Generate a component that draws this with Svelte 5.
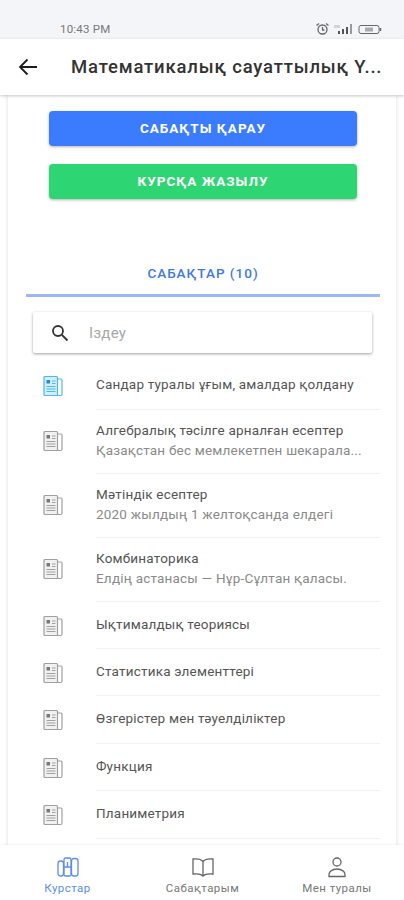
<script>
  const lessons = [
    { title: 'Сандар туралы ұғым, амалдар қолдану', active: true, h: 51 },
    { title: 'Алгебралық тәсілге арналған есептер', sub: 'Қазақстан бес мемлекетпен шекарала...', h: 64 },
    { title: 'Мәтіндік есептер', sub: '2020 жылдың 1 желтоқсанда елдегі', h: 64 },
    { title: 'Комбинаторика', sub: 'Елдің астанасы — Нұр-Сұлтан қаласы.', h: 64 },
    { title: 'Ықтималдық теориясы', h: 47 },
    { title: 'Статистика элементтері', h: 47 },
    { title: 'Өзгерістер мен тәуелділіктер', h: 48 },
    { title: 'Функция', h: 47 },
    { title: 'Планиметрия', h: 48 }
  ];
</script>

<div class="screen">
  <div class="status">
    <span class="time">10:43 PM</span>
    <div class="status-icons">
      <svg width="15" height="14" viewBox="0 0 15 14" fill="none" stroke="#666" stroke-width="1.3">
        <circle cx="7.5" cy="7.5" r="4.5" />
        <path d="M7.5 5v3h2M1.5 3.5l2.5-2M13.5 3.5l-2.5-2" />
      </svg>
      <svg width="22" height="12" viewBox="0 0 22 12" fill="#555">
        <rect x="5" y="8" width="2" height="3" />
        <rect x="9" y="6" width="2" height="5" />
        <rect x="13" y="4" width="2" height="7" />
        <rect x="17" y="1" width="2" height="10" fill="#999" />
        <rect x="1" y="2" width="6" height="3" fill="#d4d4d4" />
      </svg>
      <svg width="25" height="11" viewBox="0 0 25 11" fill="none" stroke="#666" stroke-width="1">
        <rect x="1" y="1.5" width="20" height="8" rx="2" />
        <path d="M22.5 4v3" stroke-width="1.5" />
        <rect x="7" y="3.5" width="8" height="4" fill="#aaa" stroke="none" />
      </svg>
    </div>
  </div>

  <header class="topbar">
    <svg class="back" width="20" height="18" viewBox="0 0 20 18" fill="none" stroke="#1c1c1c" stroke-width="1.8">
      <path d="M19 9H2M9.5 1.5 2 9l7.5 7.5" />
    </svg>
    <h1>Математикалық сауаттылық Ү...</h1>
  </header>

  <main class="card">
    <div class="actions">
      <button class="btn blue">САБАҚТЫ ҚАРАУ</button>
      <button class="btn green">КУРСҚА ЖАЗЫЛУ</button>
    </div>

    <div class="tab">САБАҚТАР (10)</div>

    <div class="search">
      <svg width="18" height="18" viewBox="0 0 18 18" fill="none" stroke="#333" stroke-width="1.8">
        <circle cx="7" cy="7" r="5" />
        <path d="M11 11l5.5 5.5" />
      </svg>
      <span>Іздеу</span>
    </div>

    <ul class="lessons">
      {#each lessons as lesson}
        <li class="lesson" class:plain={!lesson.sub && !lesson.active} class:first={lesson.active} style="height: {lesson.h}px">
          <svg class="doc" class:active={lesson.active} width="22" height="22" viewBox="0 0 22 22" fill="none" stroke="currentColor" stroke-width="1.2">
            <path class="sheet" d="M2 2.5a1 1 0 0 1 1-1h11.500a1 1 0 0 1 1 1V20.500H3a1 1 0 0 1-1-1z" />
            <path d="M15.500 4H19a1 1 0 0 1 1 1v14a1.500 1.500 0 0 1-1.500 1.500H14" />
            <rect class="pic" x="4.500" y="5" width="3.500" height="3.500" stroke="none" />
            <path d="M10 6h3.500M10 8.500h3.500M4.500 11.500h9M4.500 14h9M4.500 16.500h9" />
          </svg>
          <div class="lesson-body">
            <div class="lesson-title">{lesson.title}</div>
            {#if lesson.sub}
              <div class="lesson-sub">{lesson.sub}</div>
            {/if}
          </div>
        </li>
      {/each}
    </ul>
  </main>

  <nav class="bottom">
    <div class="nav-item current">
      <svg width="24" height="22" viewBox="0 0 24 22" fill="none" stroke="currentColor" stroke-width="1.3">
        <rect x="2" y="5" width="5.500" height="15" rx="2.500" />
        <rect x="8" y="2" width="7" height="18" rx="1.500" />
        <rect x="15.500" y="2.500" width="6.500" height="17.500" rx="2.500" />
        <path d="M8 11h7M11.500 6v5" />
      </svg>
      <span>Курстар</span>
    </div>
    <div class="nav-item">
      <svg width="24" height="22" viewBox="0 0 24 22" fill="none" stroke="currentColor" stroke-width="1.3">
        <path d="M12 5.500C10 3 6 2.500 2 3v15c4-.5 8 0 10 2 2-2 6-2.500 10-2V3c-4-.5-8 0-10 2.500zM12 5.500V20" />
      </svg>
      <span>Сабақтарым</span>
    </div>
    <div class="nav-item">
      <svg width="24" height="22" viewBox="0 0 24 22" fill="none" stroke="currentColor" stroke-width="1.3">
        <circle cx="12" cy="6" r="4" />
        <path d="M4 20.500v-2c0-3 3.500-5.500 8-5.500s8 2.500 8 5.500v2z" />
      </svg>
      <span>Мен туралы</span>
    </div>
  </nav>
</div>

<style>
  :global(body) {
    margin: 0;
    background: #fff;
  }

  .screen {
    width: 404px;
    height: 900px;
    overflow: hidden;
    position: relative;
    display: flex;
    flex-direction: column;
    font-family: Roboto, "Noto Sans", sans-serif;
    background: #fff;
  }

  .status {
    height: 39px;
    flex: none;
    box-sizing: border-box;
    padding: 22px 21px 0 60px;
    display: flex;
    justify-content: space-between;
    align-items: flex-start;
    background: #f4f5f9;
  }

  .time {
    font-size: 11.5px;
    line-height: 15px;
    letter-spacing: 0.2px;
    color: #777;
  }

  .status-icons {
    display: flex;
    align-items: center;
    gap: 3px;
  }

  .topbar {
    height: 56px;
    flex: none;
    display: flex;
    align-items: center;
    background: #fff;
    box-shadow: 0 1px 3px rgba(0, 0, 0, 0.22);
    position: relative;
    z-index: 2;
  }

  .back {
    margin-left: 18px;
    margin-right: 33px;
  }

  h1 {
    margin: 0;
    font-size: 18.5px;
    font-weight: 500;
    letter-spacing: 0.82px;
    color: #333;
    white-space: nowrap;
  }

  .card {
    flex: 1;
    margin: 0 8px;
    padding: 16px 16px 0 18px;
    background: #fff;
    box-shadow: 0 0 4px rgba(0, 0, 0, 0.14);
    min-height: 0;
  }

  .actions {
    display: flex;
    flex-direction: column;
    gap: 18px;
    padding: 0 23px;
  }

  .btn {
    height: 35px;
    border: 0;
    border-radius: 4px;
    padding: 0 0 2px;
    color: #fff;
    font-family: inherit;
    font-size: 13.5px;
    font-weight: 700;
    letter-spacing: 1px;
    box-shadow: 0 1px 3px rgba(0, 0, 0, 0.3);
  }

  .blue {
    background: #3b7cff;
  }

  .green {
    background: #2ed573;
  }

  .tab {
    margin-top: 60px;
    height: 38px;
    box-sizing: border-box;
    border-bottom: 3px solid #9db8f2;
    padding-top: 6px;
    text-align: center;
    font-size: 13.5px;
    font-weight: 500;
    letter-spacing: 1px;
    color: #3f78e0;
  }

  .search {
    margin: 15px 8px 0 7px;
    height: 41px;
    display: flex;
    align-items: center;
    padding-left: 18px;
    gap: 20px;
    background: #fff;
    box-shadow: 0 1px 3px rgba(0, 0, 0, 0.38);
    border-radius: 2px;
  }

  .search span {
    font-size: 15px;
    letter-spacing: 0.3px;
    color: #a8a8a8;
  }

  .lessons {
    list-style: none;
    margin: 6px 0 0;
    padding: 0;
  }

  .lesson {
    display: flex;
    align-items: center;
    box-sizing: border-box;
  }

  .doc {
    flex: none;
    margin: 0 32px 2px 16px;
    color: #a0a0a0;
  }

  .plain .doc {
    margin-bottom: 0;
  }

  .first .doc {
    margin-top: 3px;
    margin-bottom: 0;
  }

  .doc .pic {
    fill: #777;
  }

  .doc .sheet {
    fill: #f1f1f1;
  }

  .doc.active {
    color: #4bb8f2;
  }

  .doc.active .pic {
    fill: #1c8be8;
  }

  .doc.active .sheet {
    fill: #d3eefc;
  }

  .lesson-body {
    flex: 1;
    height: 100%;
    display: flex;
    flex-direction: column;
    justify-content: center;
    gap: 3px;
    padding-bottom: 2px;
    border-bottom: 1px solid #f1f1f1;
    box-sizing: border-box;
  }

  .first .lesson-body {
    padding-bottom: 0;
  }

  .lesson-title {
    font-size: 13.5px;
    line-height: 17px;
    letter-spacing: 0.2px;
    color: #555;
    white-space: nowrap;
  }

  .lesson-sub {
    font-size: 13.5px;
    line-height: 17px;
    letter-spacing: 0.2px;
    color: #8a8a8a;
    white-space: nowrap;
  }

  .bottom {
    position: absolute;
    left: 0;
    right: 0;
    bottom: 0;
    height: 55px;
    display: grid;
    grid-template-columns: 135px 135px 134px;
    background: #fff;
    box-shadow: 0 -1px 2px rgba(0, 0, 0, 0.05);
    z-index: 2;
  }

  .nav-item {
    display: flex;
    flex-direction: column;
    align-items: center;
    padding-top: 11px;
    color: #777;
    font-size: 11.5px;
    letter-spacing: 0.45px;
    gap: 3px;
  }

  .nav-item svg {
    color: #666;
  }

  .nav-item.current,
  .nav-item.current svg {
    color: #5b8df0;
  }
</style>
